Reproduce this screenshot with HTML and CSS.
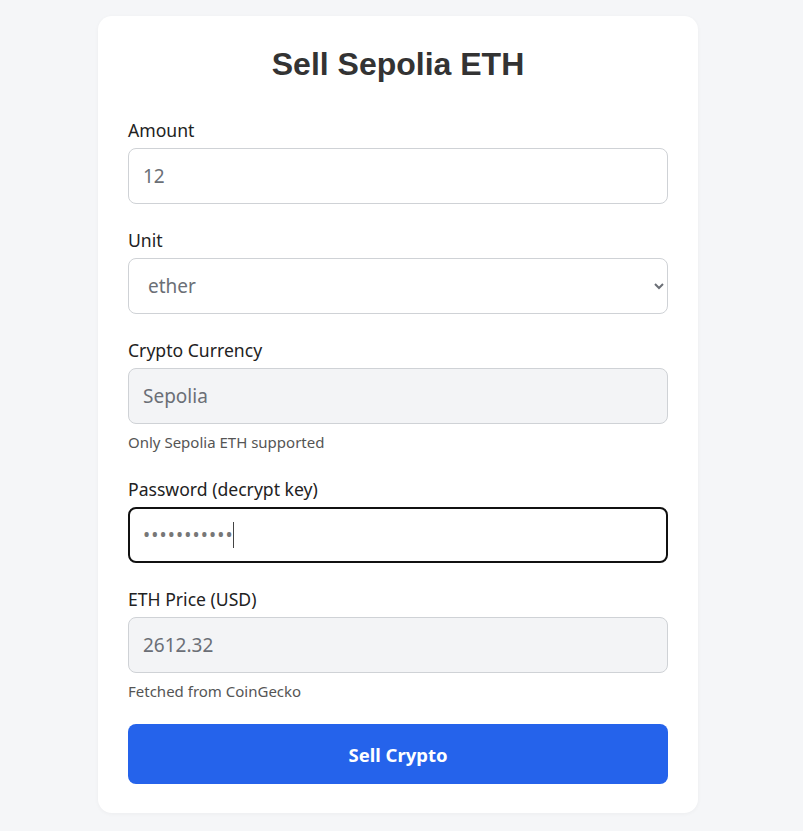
FILE: index.html
```html
<!DOCTYPE html>
<html lang="en">
<head>
<meta charset="utf-8">
<title>Sell Sepolia ETH</title>
<link rel="stylesheet" href="styles.css">
</head>
<body>
<main class="page">
  <form class="card">
    <h1 class="title">Sell Sepolia ETH</h1>

    <div class="group">
      <label class="label" for="amount">Amount</label>
      <input class="field" id="amount" type="text" value="12">
    </div>

    <div class="group">
      <label class="label" for="unit">Unit</label>
      <select class="field select" id="unit">
        <option>ether</option>
        <option>gwei</option>
        <option>wei</option>
      </select>
    </div>

    <div class="group">
      <label class="label" for="crypto">Crypto Currency</label>
      <input class="field readonly" id="crypto" type="text" value="Sepolia" readonly>
      <p class="help">Only Sepolia ETH supported</p>
    </div>

    <div class="group">
      <label class="label" for="pw">Password (decrypt key)</label>
      <div class="pw-wrap">
        <input class="field focused" id="pw" type="password" value="12345678901">
        <span class="caret"></span>
      </div>
    </div>

    <div class="group">
      <label class="label" for="price">ETH Price (USD)</label>
      <input class="field readonly" id="price" type="text" value="2612.32" readonly>
      <p class="help">Fetched from CoinGecko</p>
    </div>

    <button class="submit" type="button">Sell Crypto</button>
  </form>
</main>
</body>
</html>
```

FILE: styles.css
```css
* { box-sizing: border-box; }

html, body {
  margin: 0;
  padding: 0;
}

body {
  background: #f5f6f8;
  font-family: "Noto Sans", "Open Sans", sans-serif;
  color: #222;
}

.page {
  display: flex;
  justify-content: center;
  padding: 16px 0 17px;
}

.card {
  width: 600px;
  margin-left: -7px;
  background: #fff;
  border-radius: 14px;
  padding: 26px 30px 29px;
  box-shadow: 0 1px 4px rgba(0, 0, 0, 0.04);
}

.title {
  margin: 0 0 32px;
  text-align: center;
  font-family: "Liberation Sans", Arial, sans-serif;
  font-weight: 700;
  font-size: 32px;
  line-height: 44px;
  color: #333;
}

.group {
  display: flex;
  flex-direction: column;
  margin-bottom: 24px;
}

.label {
  font-size: 17.6px;
  line-height: 24px;
  margin-bottom: 6px;
  color: #222;
}

.field {
  width: 100%;
  height: 56px;
  border: 1px solid #cfd2d6;
  border-radius: 8px;
  padding: 0 14px;
  font-family: "Noto Sans", "Open Sans", sans-serif;
  font-size: 19px;
  color: #6b6f76;
  background: #fff;
  outline: none;
}

.select {
  padding: 0 10px 0 15px;
}

.readonly {
  background: #f3f4f6;
}

.pw-wrap {
  position: relative;
}

.focused {
  border: 2px solid #111;
  padding: 0 13px;
  letter-spacing: 1.1px;
  color: #777;
}

.caret {
  position: absolute;
  left: 105px;
  top: 15px;
  width: 1px;
  height: 26px;
  background: #444;
}

.help {
  margin: 8px 0 0;
  font-size: 15px;
  line-height: 21px;
  color: #555;
}

.submit {
  display: block;
  width: 100%;
  height: 60px;
  margin-top: -2px;
  border: none;
  border-radius: 8px;
  background: #2563eb;
  color: #fff;
  font-family: "Noto Sans", "Open Sans", sans-serif;
  font-size: 18.5px;
  font-weight: 700;
  cursor: pointer;
}
```
